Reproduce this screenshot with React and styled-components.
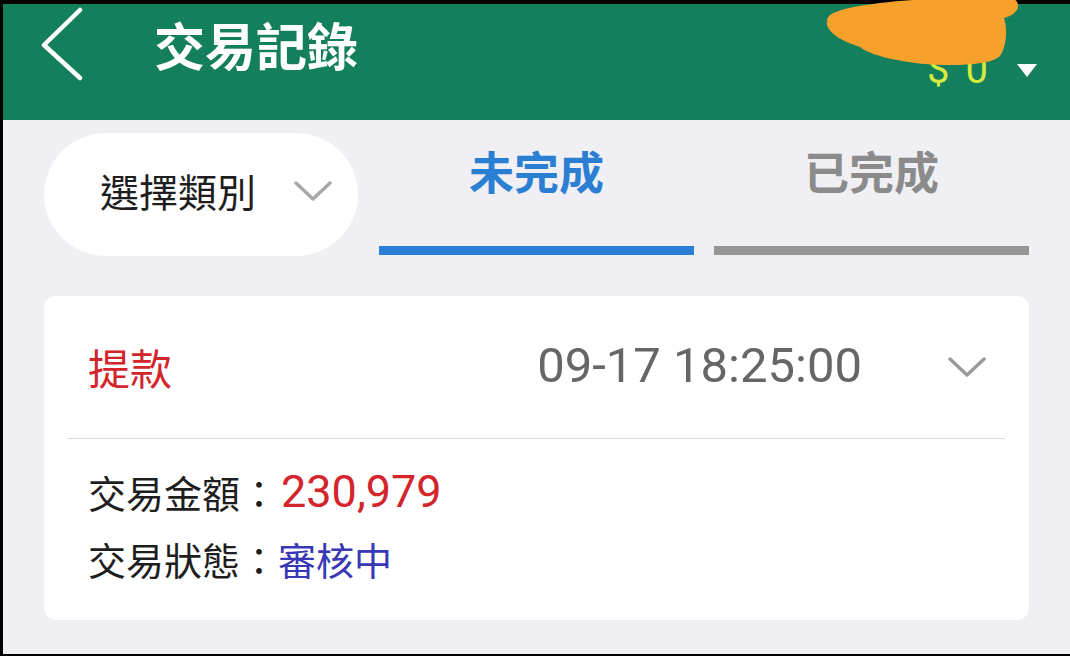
import React, { useState } from 'react';
import styled, { createGlobalStyle } from 'styled-components';

const GlobalStyle = createGlobalStyle`
  html, body {
    margin: 0;
    padding: 0;
    background: #000;
  }
  body {
    font-family: 'Noto Sans CJK TC', 'Noto Sans', sans-serif;
  }
`;

function App() {
  const [activeTab, setActiveTab] = useState('pending');

  return (
    <>
      <GlobalStyle />
      <Screen>
        <Header>
          <BackButton aria-label="back">
            <svg width="48" height="80" viewBox="0 0 48 80">
              <path d="M39 6 L3 41 L39 74" fill="none" stroke="#fff" strokeWidth="4.5" strokeLinecap="round" strokeLinejoin="round" />
            </svg>
          </BackButton>
          <Title>交易記錄</Title>
          <Spacer />
          <Balance>
            <Amount>
              <span>$</span>
              <span>0</span>
            </Amount>
            <svg width="20" height="13" viewBox="0 0 20 13">
              <path d="M0 0 L20 0 L10 13 Z" fill="#fff" />
            </svg>
          </Balance>
        </Header>
        {/* redaction scribble painted over the account name */}
        <Scribble width="210" height="76" viewBox="0 0 210 76">
          <path
            d="M16 12 C40 2 120 -4 192 -2 C202 2 200 14 184 18 C188 30 186 48 180 56 C170 66 130 66 105 64 C75 61 50 55 40 47 C25 42 10 35 7 25 C6 17 10 14 16 12 Z"
            fill="#f6a12b"
          />
        </Scribble>

        <Toolbar>
          <CategoryPill>
            <PillText>選擇類別</PillText>
            <svg width="38" height="20" viewBox="0 0 38 20">
              <path d="M2 2 L19 18 L36 2" fill="none" stroke="#a8a8a8" strokeWidth="3.5" strokeLinecap="round" strokeLinejoin="round" />
            </svg>
          </CategoryPill>
          <Tab onClick={() => setActiveTab('pending')}>
            <TabLabel $active={activeTab === 'pending'}>未完成</TabLabel>
            <Underline $active={activeTab === 'pending'} />
          </Tab>
          <Tab onClick={() => setActiveTab('done')}>
            <TabLabel $active={activeTab === 'done'}>已完成</TabLabel>
            <Underline $active={activeTab === 'done'} />
          </Tab>
        </Toolbar>

        <Card>
          <CardHead>
            <TxType>提款</TxType>
            <TxTime>09-17 18:25:00</TxTime>
            <svg width="38" height="22" viewBox="0 0 38 22">
              <path d="M2 3 L19 19 L36 3" fill="none" stroke="#9a9a9a" strokeWidth="3.5" strokeLinecap="round" strokeLinejoin="round" />
            </svg>
          </CardHead>
          <Divider />
          <CardBody>
            <InfoRow>
              交易金額：<Value $color="#d3252b" $numeric>230,979</Value>
            </InfoRow>
            <InfoRow>
              交易狀態：<Value $color="#3838b6">審核中</Value>
            </InfoRow>
          </CardBody>
        </Card>
      </Screen>
    </>
  );
}

const Screen = styled.div`
  position: relative;
  margin: 4px 0 2px 3px;
  height: 650px;
  background: #efeff4;
  display: flex;
  flex-direction: column;
`;

const Header = styled.header`
  flex-shrink: 0;
  height: 116px;
  box-sizing: border-box;
  padding: 0 33px 0 38px;
  background: #137f5c;
  display: flex;
  align-items: flex-start;
`;

const BackButton = styled.button`
  display: flex;
  align-items: center;
  height: 80px;
  padding: 0;
  border: 0;
  background: none;
  cursor: pointer;
`;

const Title = styled.h1`
  margin: 0 0 0 65px;
  height: 80px;
  line-height: 80px;
  font-size: 51px;
  font-weight: 700;
  color: #fff;
`;

const Spacer = styled.div`
  flex: 1;
`;

const Balance = styled.div`
  align-self: flex-end;
  margin-bottom: 30px;
  display: flex;
  align-items: center;
  gap: 29px;
`;

const Amount = styled.span`
  display: flex;
  gap: 16px;
  font-family: Roboto, 'Liberation Sans', sans-serif;
  font-size: 40px;
  line-height: 1;
  color: #d6ea3e;
`;

const Scribble = styled.svg`
  position: absolute;
  top: -4px;
  left: 817px;
  display: block;
  z-index: 2;
`;

const Toolbar = styled.div`
  display: flex;
  gap: 20px;
  padding: 13px 41px 0;
`;

const CategoryPill = styled.div`
  flex-shrink: 0;
  width: 314px;
  height: 123px;
  margin-right: 1px;
  box-sizing: border-box;
  padding: 0 0 8px 56px;
  border-radius: 62px;
  background: #fff;
  display: flex;
  align-items: center;
  gap: 38px;
`;

const PillText = styled.span`
  font-size: 39px;
  line-height: 1;
  color: #1e1e1e;
`;

const Tab = styled.div`
  flex: 1;
  display: flex;
  flex-direction: column;
  align-items: center;
  cursor: pointer;
`;

const TabLabel = styled.span`
  margin-top: 15px;
  font-size: 45px;
  font-weight: 700;
  line-height: 1;
  color: ${(p) => (p.$active ? '#2b7fd3' : '#8b8b8b')};
`;

const Underline = styled.div`
  margin-top: auto;
  margin-bottom: 1px;
  width: 100%;
  height: 9px;
  background: ${(p) => (p.$active ? '#2a7fd4' : '#959595')};
`;

const Card = styled.section`
  margin: 40px 41px 0;
  height: 324px;
  background: #fff;
  border-radius: 12px;
  display: flex;
  flex-direction: column;
`;

const CardHead = styled.div`
  height: 142px;
  display: flex;
  align-items: center;
  padding: 0 43px 0 44px;
`;

const TxType = styled.span`
  flex: 1;
  font-size: 42px;
  line-height: 1;
  color: #d3262b;
`;

const TxTime = styled.span`
  margin: 0 86px 4px 0;
  font-family: Roboto, 'Liberation Sans', sans-serif;
  font-size: 49px;
  line-height: 1;
  color: #666;
`;

const Divider = styled.div`
  height: 1px;
  margin: 0 24px;
  background: #dcdcdc;
`;

const CardBody = styled.div`
  padding: 19px 44px 0;
`;

const InfoRow = styled.div`
  height: 67px;
  display: flex;
  align-items: center;
  font-size: 38px;
  line-height: 1;
  color: #1e1e1e;
`;

const Value = styled.span`
  color: ${(p) => p.$color};
  ${(p) => p.$numeric && `font-family: Roboto, 'Liberation Sans', sans-serif; font-size: 45px; margin-left: 3px;`}
`;

export default App;
